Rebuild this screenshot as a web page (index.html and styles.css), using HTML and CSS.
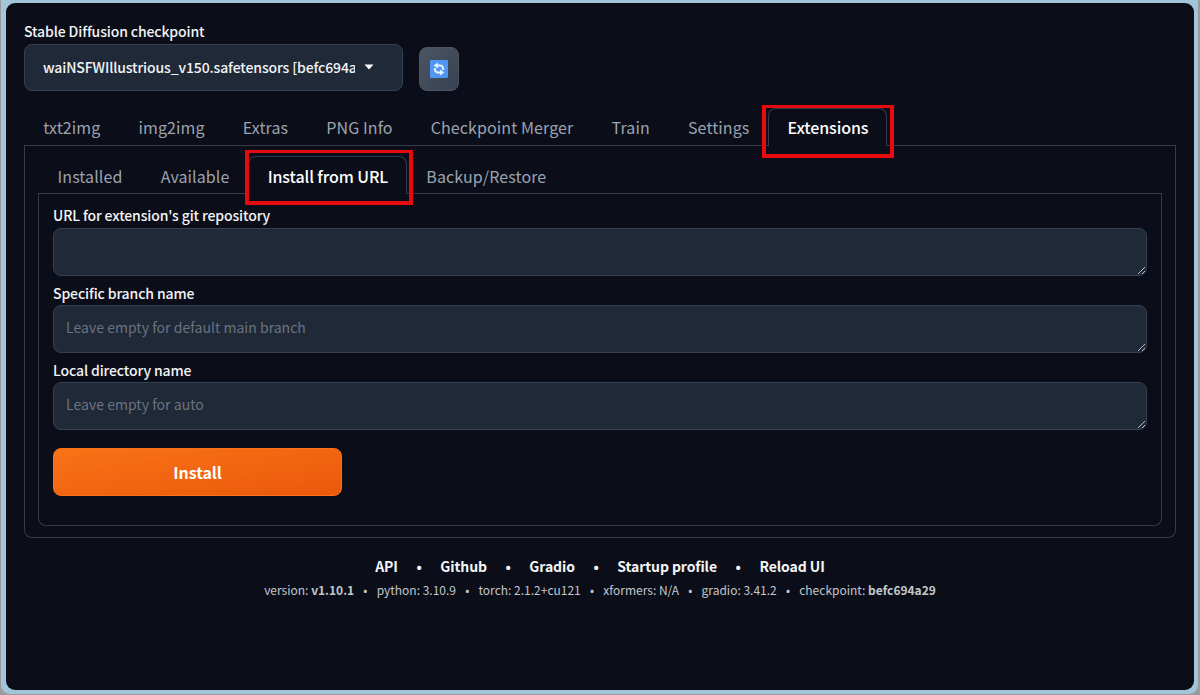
FILE: index.html
```html
<!DOCTYPE html>
<html lang="en">
<head>
  <meta charset="UTF-8">
  <title>Stable Diffusion</title>
  <link rel="stylesheet" href="styles.css">
</head>
<body>
  <div class="frame">
    <div class="app">

      <div class="quicksettings">
        <div class="checkpoint">
          <label class="label">Stable Diffusion checkpoint</label>
          <div class="dropdown">
            <span class="dropdown-value">waiNSFWIllustrious_v150.safetensors [befc694a</span>
            <svg class="caret" width="10" height="6" viewBox="0 0 10 6"><path d="M0.5 0.5h9L5 5.5z" fill="#fff"/></svg>
          </div>
        </div>
        <button class="refresh">
          <svg width="18" height="18" viewBox="0 0 18 18">
            <rect width="18" height="18" rx="1" fill="#5097f3"/>
            <g fill="none" stroke="#e6f1ff" stroke-width="2">
              <path d="M6.5 5.6h3.4a3.3 3.3 0 0 1 3.3 3.3v1"/>
              <path d="M11.5 12.4H8.1a3.3 3.3 0 0 1-3.3-3.3v-1"/>
            </g>
            <path d="M8 2.6v6L3.6 5.6zM10 15.4v-6l4.4 3z" fill="#e6f1ff"/>
          </svg>
        </button>
      </div>

      <div class="tabs main-tabs">
        <button class="tab">txt2img</button>
        <button class="tab">img2img</button>
        <button class="tab">Extras</button>
        <button class="tab">PNG Info</button>
        <button class="tab">Checkpoint Merger</button>
        <button class="tab">Train</button>
        <button class="tab">Settings</button>
        <button class="tab selected">Extensions<span class="mark mark-main"></span></button>
      </div>

      <div class="panel main-panel">
        <div class="tabs">
          <button class="tab">Installed</button>
          <button class="tab">Available</button>
          <button class="tab selected">Install from URL<span class="mark mark-sub"></span></button>
          <button class="tab">Backup/Restore</button>
        </div>
        <div class="panel sub-panel">
          <div class="field">
            <label class="label">URL for extension's git repository</label>
            <textarea class="input"></textarea>
            <svg class="grip" width="9" height="9" viewBox="0 0 9 9"><path d="M1 8L8 1M5 8L8 5"/></svg>
          </div>
          <div class="field">
            <label class="label">Specific branch name</label>
            <textarea class="input" placeholder="Leave empty for default main branch"></textarea>
            <svg class="grip" width="9" height="9" viewBox="0 0 9 9"><path d="M1 8L8 1M5 8L8 5"/></svg>
          </div>
          <div class="field">
            <label class="label">Local directory name</label>
            <textarea class="input" placeholder="Leave empty for auto"></textarea>
            <svg class="grip" width="9" height="9" viewBox="0 0 9 9"><path d="M1 8L8 1M5 8L8 5"/></svg>
          </div>
          <button class="install">Install</button>
        </div>
      </div>

      <div class="footer">
        <div class="links">
          <a>API</a><i>•</i><a>Github</a><i>•</i><a>Gradio</a><i>•</i><a>Startup profile</a><i>•</i><a>Reload UI</a>
        </div>
        <div class="versions">
          <span>version: <b>v1.10.1</b></span><i>•</i><span>python: 3.10.9</span><i>•</i><span>torch: 2.1.2+cu121</span><i>•</i><span>xformers: N/A</span><i>•</i><span>gradio: 3.41.2</span><i>•</i><span>checkpoint: <b>befc694a29</b></span>
        </div>
      </div>

    </div>
  </div>
</body>
</html>
```
FILE: styles.css
```css
* {
  box-sizing: border-box;
}

body {
  margin: 0;
  height: 695px;
  padding: 0 2px 1px 1px;
  background: #9a9c9d;
  font-family: "Noto Sans CJK JP", "Noto Sans", sans-serif;
  color: #f3f4f6;
  overflow: hidden;
}

button,
textarea {
  margin: 0;
  font-family: inherit;
}

.frame {
  height: 694px;
  padding: 3px 4px 4px 5px;
  background: #a3c5da;
  border-radius: 0 0 9px 9px;
}

.app {
  height: 687px;
  padding: 20px 18px 0;
  background: #0b0e18;
  border-radius: 9px;
}

.label {
  display: block;
  height: 20px;
  line-height: 20px;
  font-size: 14px;
  font-weight: 500;
  letter-spacing: -0.12px;
  white-space: nowrap;
}

/* checkpoint row */
.quicksettings {
  display: flex;
  align-items: flex-end;
  gap: 16px;
}

.checkpoint {
  width: 379px;
}

.checkpoint .label {
  line-height: 17px;
}

.dropdown {
  display: flex;
  align-items: center;
  height: 47px;
  margin-top: 1px;
  padding: 0 18px 2px;
  background: #1f2937;
  border: 1px solid #374151;
  border-radius: 8px;
}

.dropdown-value {
  width: 312px;
  overflow: hidden;
  white-space: nowrap;
  font-size: 14px;
  font-weight: 500;
  letter-spacing: -0.12px;
  line-height: 22px;
}

.caret {
  margin-left: 9px;
}

.refresh {
  display: flex;
  align-items: center;
  justify-content: center;
  width: 40px;
  height: 44px;
  padding: 0 1px 0 0;
  background: linear-gradient(to bottom right, #4b5563, #374151);
  border: 1px solid #4b5563;
  border-radius: 8px;
}

/* tabs */
.tabs {
  display: flex;
  height: 38px;
  border-bottom: 1px solid #343c49;
}

.main-tabs {
  margin-top: 17px;
}

.tab {
  position: relative;
  height: 38px;
  padding: 0 18px 0 18.2px;
  background: none;
  border: 1px solid transparent;
  border-bottom: none;
  border-radius: 8px 8px 0 0;
  color: #9ca3af;
  font-size: 16px;
  letter-spacing: 0.1px;
  line-height: 36px;
  white-space: nowrap;
}

.main-tabs .tab {
  line-height: 35px;
}

.tab.selected {
  background: #0b0e18;
  border-color: #343c49;
  color: #fff;
  font-weight: 500;
  letter-spacing: -0.1px;
}

/* red highlight boxes */
.mark {
  position: absolute;
  border: 4px solid #e60b0e;
  border-top-width: 3px;
}

.mark-main {
  inset: -4px -8px -12px -7px;
}

.mark-sub {
  inset: -7px -7px -11px -4px;
}

.panel {
  border: 1px solid #343c49;
  border-top: none;
  border-radius: 0 0 8px 8px;
}

.main-panel {
  height: 392px;
  padding: 10px 13px 0;
}

.main-panel .tabs {
  padding-left: 0.3px;
}

.sub-panel {
  height: 332px;
  padding: 12px 14px 0;
}

/* form */
.field {
  position: relative;
  height: 77px;
}

.field:first-child .label {
  line-height: 19px;
}

.input {
  display: block;
  width: 100%;
  height: 48px;
  margin-top: 2px;
  padding: 11px 12px 12px;
  background: #1f2937;
  border: 1px solid #374151;
  border-radius: 8px;
  font-size: 14px;
  line-height: 20px;
  letter-spacing: 0.03px;
  resize: none;
  overflow: hidden;
}

.input::placeholder {
  color: #6b7280;
}

.grip {
  position: absolute;
  right: 1px;
  top: 60px;
  fill: none;
  stroke: #b5bac2;
}

.install {
  display: block;
  width: 289px;
  height: 48px;
  margin-top: 11px;
  padding: 0 0 1px;
  background: linear-gradient(to bottom right, #f97316, #ea580c);
  border: 1px solid #f97316;
  border-radius: 8px;
  color: #fff;
  font-size: 16px;
  font-weight: 700;
  letter-spacing: -0.1px;
}

/* footer */
.footer {
  margin-top: 17px;
}

.footer i {
  font-style: normal;
}

.links,
.versions {
  display: flex;
  justify-content: center;
  white-space: nowrap;
}

.links {
  gap: 18.6px;
  height: 23px;
  line-height: 22px;
  font-size: 14px;
  font-weight: 700;
  letter-spacing: -0.08px;
}

.versions {
  gap: 9.2px;
  height: 24px;
  line-height: 24px;
  font-size: 12px;
  color: #c3c6cc;
}
```
